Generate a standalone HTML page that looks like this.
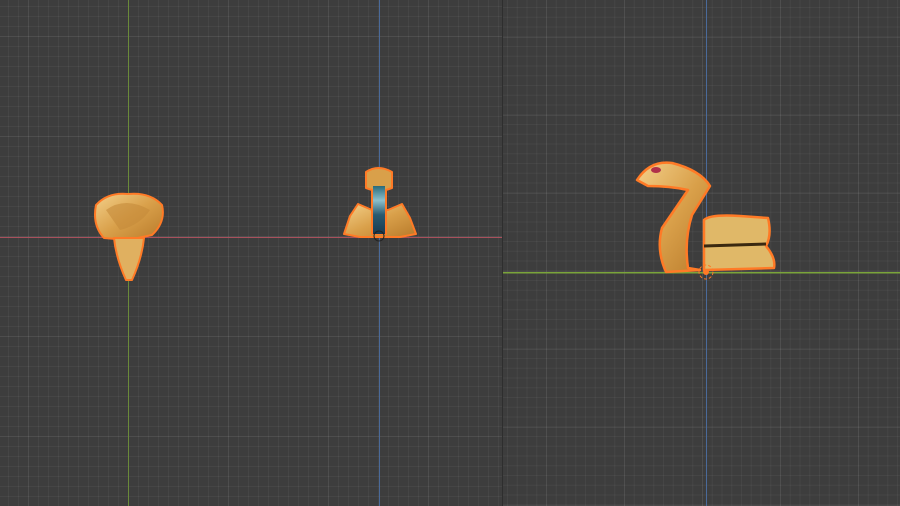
<!DOCTYPE html>
<html><head><style>
html,body{margin:0;padding:0;width:900px;height:506px;overflow:hidden;background:#3d3d3d}
.vp{position:absolute;top:0;height:506px;background-color:#3d3d3d}
#l{left:0;width:502px;
background-image:
linear-gradient(90deg,rgba(255,255,255,0.045) 1px,transparent 1px),
linear-gradient(0deg,rgba(255,255,255,0.045) 1px,transparent 1px),
linear-gradient(90deg,rgba(255,255,255,0.045) 1px,transparent 1px),
linear-gradient(0deg,rgba(255,255,255,0.045) 1px,transparent 1px);
background-size:100px 100px,100px 100px,10px 10px,10px 10px;
background-position:28px 37px,28px 37px,8px 7px,8px 7px}
#r{left:503px;width:397px;
background-image:
linear-gradient(90deg,rgba(255,255,255,0.05) 1px,transparent 1px),
linear-gradient(0deg,rgba(255,255,255,0.05) 1px,transparent 1px),
linear-gradient(90deg,rgba(255,255,255,0.045) 1px,transparent 1px),
linear-gradient(0deg,rgba(255,255,255,0.045) 1px,transparent 1px);
background-size:78px 78px,78px 78px,9.75px 9.75px,9.75px 9.75px;
background-position:43px 38px,43px 38px,4px 8px,4px 8px}
#sep{position:absolute;left:502px;top:0;width:1px;height:506px;background:#2e2e2e}
svg{position:absolute;left:0;top:0}
</style></head><body>
<div class="vp" id="l"></div><div class="vp" id="r"></div><div id="sep"></div>
<svg width="900" height="506">
<defs>
<linearGradient id="g1" x1="0" y1="0" x2="1" y2="1"><stop offset="0" stop-color="#f3d08a"/><stop offset=".5" stop-color="#d9a04a"/><stop offset="1" stop-color="#b87a2a"/></linearGradient>
<linearGradient id="bl" x1="0" y1="0" x2="0" y2="1"><stop offset="0" stop-color="#2a6a7a"/><stop offset=".3" stop-color="#8cc0cc"/><stop offset=".6" stop-color="#2a5a70"/><stop offset="1" stop-color="#1a3a50"/></linearGradient>
</defs>
<rect x="128" y="0" width="1" height="506" fill="#6a8a3a"/>
<rect x="0" y="237" width="502" height="1" fill="#a8505c"/>
<rect x="379" y="0" width="1" height="506" fill="#4a6a9a"/>
<rect x="503" y="272" width="397" height="1.5" fill="#7aa43a"/>
<rect x="706" y="0" width="1" height="506" fill="#4a6a9a"/>
<!-- object 1 -->
<g stroke="#ff7a26" stroke-width="2" stroke-linejoin="round">
<path d="M96,205 Q108,192 128,194 Q150,192 162,205 Q166,222 152,235 L128,240 L104,238 Q92,225 96,205Z" fill="url(#g1)"/>
<path d="M114,238 L144,238 Q142,258 132,280 L126,280 Q116,258 114,238Z" fill="#e0b060"/>
</g>
<path d="M106,210 Q125,196 150,210 Q140,225 120,230Z" fill="#c48a3a" opacity=".6"/>
<!-- object 2 -->
<g stroke="#ff7a26" stroke-width="2" stroke-linejoin="round">
<path d="M344,234 L350,216 L358,204 L372,210 L388,210 L402,204 L410,218 L416,234 L400,237 L360,237Z" fill="url(#g1)"/>
<path d="M366,172 Q378,164 392,172 L392,188 L386,190 L386,234 L372,234 L372,190 L366,188Z" fill="#d9a04a"/>
</g>
<rect x="373" y="186" width="12" height="48" fill="url(#bl)"/>
<circle cx="379" cy="236" r="5" fill="none" stroke="#222" stroke-width="1"/>
<!-- object 3 -->
<g stroke="#ff7a26" stroke-width="2.5" stroke-linejoin="round">
<path d="M637,180 Q650,160 672,163 Q700,170 710,186 L692,215 Q684,240 688,268 L700,270 L666,272 Q656,250 662,228 L688,190 Q670,186 648,186 Z" fill="url(#g1)"/>
<path d="M704,220 Q710,214 740,216 L768,218 Q772,235 766,246 Q776,258 774,268 L704,270 Z" fill="#e0b868"/>
</g>
<path d="M704,246 L766,244" stroke="#3a2810" stroke-width="3"/>
<ellipse cx="656" cy="170" rx="5" ry="3" fill="#b0304a"/>
<circle cx="706" cy="272" r="7" fill="none" stroke="#ff7a26" stroke-width="1" stroke-dasharray="3 2"/>
<circle cx="706" cy="272" r="3" fill="#ff7a26"/>
</svg>
</body></html>
